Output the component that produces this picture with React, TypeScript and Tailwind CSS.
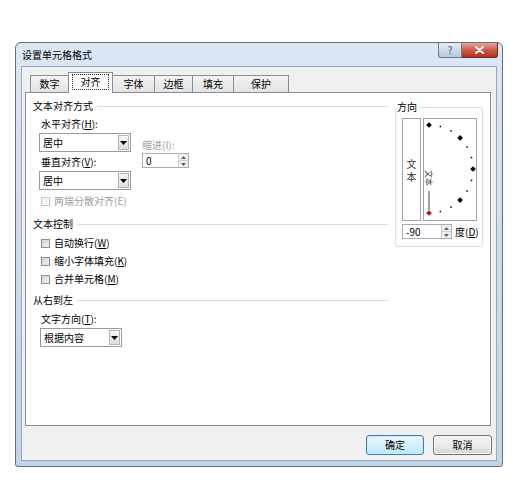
import React from "react";

const Tri = ({ color = "#000" }: { color?: string }) => (
  <svg width="7" height="4" viewBox="0 0 7 4">
    <path d="M0 0 L7 0 L3.5 4 Z" fill={color} />
  </svg>
);

function Select({ w, text }: { w: string; text: string }) {
  return (
    <div className={`flex h-[19px] ${w} border border-[#9a9a9a] bg-white`}>
      <div className="flex flex-1 items-center pl-[3px] text-black">{text}</div>
      <div className="m-[1px] flex w-[11px] items-center justify-center border border-[#b4b4b4] bg-gradient-to-b from-[#f6f6f6] to-[#dedede]">
        <Tri />
      </div>
    </div>
  );
}

function Spin({ w, text }: { w: string; text: string }) {
  return (
    <div className={`flex h-[15px] ${w} border border-[#abadb3] bg-white`}>
      <div className="flex flex-1 items-center pl-[3px] text-black leading-none">{text}</div>
      <div className="flex w-[10px] flex-col border-l border-[#d0d0d0] bg-[#f0f0f0]">
        <div className="flex flex-1 items-center justify-center border-b border-[#d0d0d0]">
          <svg width="5" height="3" viewBox="0 0 5 3">
            <path d="M0 3 L5 3 L2.5 0 Z" fill="#606060" />
          </svg>
        </div>
        <div className="flex flex-1 items-center justify-center">
          <svg width="5" height="3" viewBox="0 0 5 3">
            <path d="M0 0 L5 0 L2.5 3 Z" fill="#606060" />
          </svg>
        </div>
      </div>
    </div>
  );
}

function Heading({ text }: { text: string }) {
  return (
    <div className="flex h-[14px] items-center">
      <span className="text-black">{text}</span>
      <div className="ml-[4px] h-px flex-1 bg-[#dcdcdc]" />
    </div>
  );
}

function Check({ label, disabled }: { label: React.ReactNode; disabled?: boolean }) {
  return (
    <div className="flex h-[14px] items-center pl-[8px]">
      <div
        className={`h-[9px] w-[9px] border ${
          disabled ? "border-[#c8c8c8] bg-[#f4f4f4]" : "border-[#8f8f8f] bg-gradient-to-br from-[#d4d4d4] to-[#f2f2f2]"
        }`}
      />
      <span className={`ml-[4px] ${disabled ? "text-[#a0a0a0]" : "text-black"}`}>{label}</span>
    </div>
  );
}

const U = ({ c }: { c: string }) => <span className="underline underline-offset-[1px]">{c}</span>;

function Dial() {
  const cx = 5;
  const cy = 50;
  const r = 44;
  const pts = [];
  for (let a = -90; a <= 90; a += 15) {
    const rad = (a * Math.PI) / 180;
    const x = cx + r * Math.cos(rad);
    const y = cy - r * Math.sin(rad);
    const big = a % 45 === 0;
    if (a === -90) {
      pts.push(
        <rect key={a} x={x - 2} y={y - 2} width={4} height={4} fill="#b01818" transform={`rotate(45 ${x} ${y})`} />
      );
    } else if (big) {
      pts.push(
        <rect key={a} x={x - 2} y={y - 2} width={4} height={4} fill="#000" transform={`rotate(45 ${x} ${y})`} />
      );
    } else {
      pts.push(<rect key={a} x={x - 0.75} y={y - 0.75} width={1.5} height={1.5} fill="#000" />);
    }
  }
  return (
    <svg width="52" height="101" viewBox="0 0 52 101">
      {pts}
      <text
        x="0"
        y="0"
        fontSize="8"
        fill="#303030"
        fontFamily="Noto Sans CJK SC, sans-serif"
        transform="translate(1.5 51) rotate(90)"
      >
        文本
      </text>
      <line x1="5" y1="72" x2="5" y2="91" stroke="#808080" strokeWidth="1.5" />
    </svg>
  );
}

export default function App() {
  const tabs = [
    { t: "数字", w: "w-[39px]" },
    { t: "对齐", w: "w-[45px]", sel: true },
    { t: "字体", w: "w-[43px]" },
    { t: "边框", w: "w-[39px]" },
    { t: "填充", w: "w-[42px]" },
    { t: "保护", w: "w-[56px]" },
  ];
  return (
    <div className="h-[501px] w-[518px] bg-white pl-[15px] pt-[42px] font-['Noto_Sans_CJK_SC','Noto_Sans',sans-serif] text-[10px] leading-[14px]">
      <div className="flex h-[425px] w-[488px] flex-col rounded-t-[6px] rounded-b-[3px] border border-[#5f6e82] bg-gradient-to-b from-[#dce7f4] via-[#cddcee] to-[#c3d4e9]">
        {/* title bar */}
        <div className="flex h-[23px] items-start">
          <div className="ml-[6px] mt-[5px] text-[10px] text-black">设置单元格格式</div>
          <div className="ml-auto mr-[4px] flex">
            <div className="flex h-[15px] w-[24px] items-center justify-center rounded-bl-[3px] border border-t-0 border-[#6d7b8d] bg-gradient-to-b from-[#e6edf5] to-[#b9c7d8] text-[10px] leading-none text-[#40506a]">
              ?
            </div>
            <div className="flex h-[15px] w-[36px] items-center justify-center rounded-br-[3px] border border-l-0 border-t-0 border-[#6b2c2c] bg-gradient-to-b from-[#e8a494] via-[#cf5a4a] to-[#b5311f]">
              <svg width="9" height="8" viewBox="0 0 9 8">
                <path d="M1 1 L8 7 M8 1 L1 7" stroke="#fff" strokeWidth="2" strokeLinecap="round" />
              </svg>
            </div>
          </div>
        </div>
        {/* client */}
        <div className="mx-[5px] mb-[5px] flex flex-1 flex-col border border-[#98a8bc] bg-[#f0f0f0]">
          <div className="ml-[8px] mt-[5px] flex h-[20px] items-end">
            {tabs.map((tb, i) =>
              tb.sel ? (
                <div
                  key={tb.t}
                  className={`relative z-10 -mb-px ${tb.w} -ml-px flex h-[21px] items-start justify-center border border-b-0 border-[#898c95] bg-white pt-[1px]`}
                >
                  <div className="flex h-[16px] w-[37px] items-center justify-center border border-dotted border-[#303030] text-black">
                    {tb.t}
                  </div>
                </div>
              ) : (
                <div
                  key={tb.t}
                  className={`${tb.w} ${i === 0 ? "" : "-ml-px"} flex h-[17px] items-center justify-center border border-b-0 border-[#898c95] bg-gradient-to-b from-[#f3f3f3] to-[#e3e3e3] text-black`}
                >
                  {tb.t}
                </div>
              )
            )}
          </div>
          {/* panel */}
          <div className="ml-[3px] mr-[5px] flex h-[334px] border border-[#898c95] bg-white">
            <div className="flex w-[362px] flex-col pl-[7px] pt-[6px]">
              <Heading text="文本对齐方式" />
              <div className="flex">
                <div className="ml-[6px] flex w-[92px] flex-col">
                  <div className="mt-[4px] h-[14px] pl-[2px] text-black">
                    水平对齐(<U c="H" />):
                  </div>
                  <div className="mt-[2px]">
                    <Select w="w-[92px]" text="居中" />
                  </div>
                  <div className="mt-[3px] h-[14px] pl-[2px] text-black">
                    垂直对齐(<U c="V" />):
                  </div>
                  <div className="mt-[2px]">
                    <Select w="w-[92px]" text="居中" />
                  </div>
                </div>
                <div className="ml-[11px] flex flex-col">
                  <div className="mt-[25px] h-[14px] text-[#a0a0a0]">缩进(I):</div>
                  <div className="mt-[1px]">
                    <Spin w="w-[47px]" text="0" />
                  </div>
                </div>
              </div>
              <div className="mt-[4px]">
                <Check label="两端分散对齐(E)" disabled />
              </div>
              <div className="mt-[9px]">
                <Heading text="文本控制" />
              </div>
              <div className="mt-[5px]">
                <Check
                  label={
                    <>
                      自动换行(<U c="W" />)
                    </>
                  }
                />
              </div>
              <div className="mt-[4px]">
                <Check
                  label={
                    <>
                      缩小字体填充(<U c="K" />)
                    </>
                  }
                />
              </div>
              <div className="mt-[4px]">
                <Check
                  label={
                    <>
                      合并单元格(<U c="M" />)
                    </>
                  }
                />
              </div>
              <div className="mt-[7px]">
                <Heading text="从右到左" />
              </div>
              <div className="mt-[5px] h-[14px] pl-[8px] text-black">
                文字方向(<U c="T" />):
              </div>
              <div className="mt-[2px] pl-[7px]">
                <Select w="w-[82px]" text="根据内容" />
              </div>
            </div>
            <div className="ml-[7px] pt-[14px]">
              <div className="relative h-[140px] w-[88px] rounded-[3px] border border-[#d5dfe5] pl-[6px] pt-[10px]">
                <div className="absolute -top-[8px] left-[1px] bg-white pr-[3px] text-black">方向</div>
                <div className="flex gap-[2px]">
                  <div className="flex h-[103px] w-[19px] flex-col items-center justify-center border border-[#9ea5ae] text-[#303030]">
                    <span className="block h-[13px] leading-[13px]">文</span>
                    <span className="block h-[13px] leading-[13px]">本</span>
                  </div>
                  <div className="h-[103px] w-[54px] border border-[#9ea5ae]">
                    <Dial />
                  </div>
                </div>
                <div className="mt-[3px] flex items-center">
                  <Spin w="w-[50px]" text="-90" />
                  <span className="ml-[3px] text-black">
                    度(<U c="D" />)
                  </span>
                </div>
              </div>
            </div>
          </div>
          {/* buttons */}
          <div className="mr-[4px] mt-[9px] flex justify-end gap-[9px]">
            <div className="flex h-[20px] w-[58px] items-center justify-center rounded-[3px] border border-[#3c7fb1] bg-gradient-to-b from-[#eaf6fd] via-[#d9f0fc] to-[#bee6fd] text-black shadow-[inset_0_0_0_1px_#c8e8fb]">
              确定
            </div>
            <div className="flex h-[20px] w-[59px] items-center justify-center rounded-[3px] border border-[#707070] bg-gradient-to-b from-[#f2f2f2] via-[#ebebeb] to-[#d6d6d6] text-black shadow-[inset_0_0_0_1px_#fcfcfc]">
              取消
            </div>
          </div>
        </div>
      </div>
    </div>
  );
}
